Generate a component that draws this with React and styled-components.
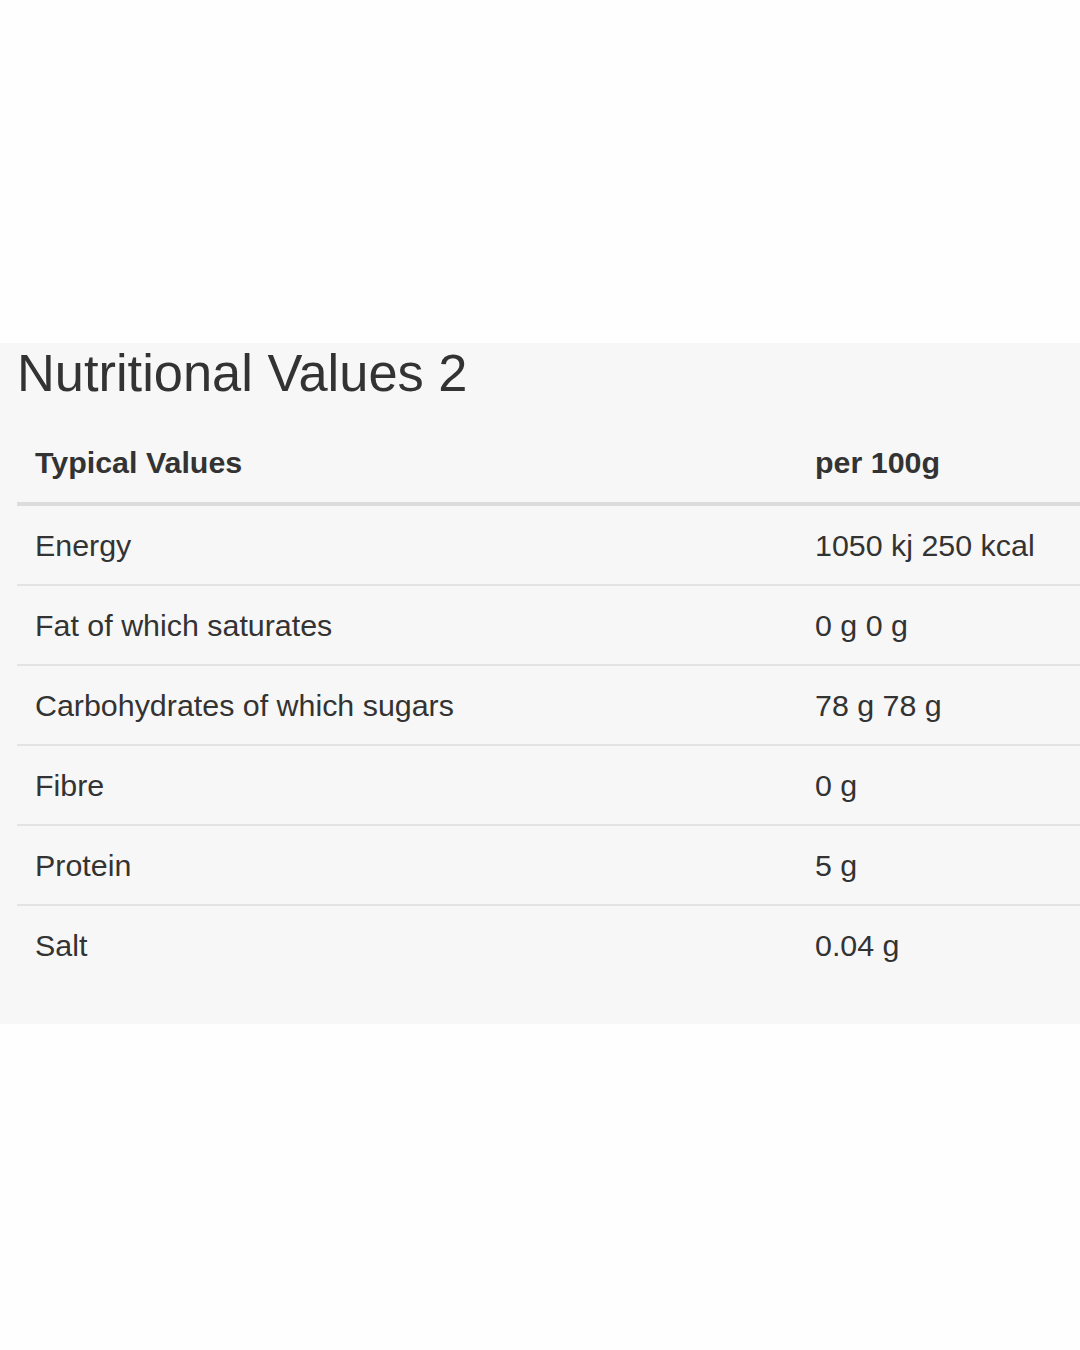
import React from "react";
import styled, { createGlobalStyle } from "styled-components";

const Global = createGlobalStyle`
  html, body { margin: 0; padding: 0; background: #fefefe; }
  body { font-family: "Liberation Sans", Arial, sans-serif; color: #333; }
`;

const Page = styled.div`
  width: 1080px;
  min-height: 1350px;
  padding-top: 343px;
  box-sizing: border-box;
  background: #fefefe;
`;

const Panel = styled.section`
  background: #f7f7f7;
  padding: 0 0 40px 17px;
  overflow: hidden;
`;

const Title = styled.h2`
  margin: 0 0 20px 0;
  font-size: 52.4px;
  font-weight: 400;
  line-height: 60px;
  color: #333;
`;

const Table = styled.table`
  width: 1063px;
  border-collapse: collapse;
  table-layout: fixed;
  font-size: 30.4px;
  color: #333;
`;

const HeadCell = styled.th`
  text-align: left;
  font-weight: 700;
  padding: 18px 18px;
  line-height: 43px;
  border-bottom: 4px solid #dddddd;
  width: ${(p) => p.$w || "auto"};
`;

const Row = styled.tr`
  border-top: ${(p) => (p.$first ? "none" : "2px solid #e3e3e3")};
`;

const Cell = styled.td`
  padding: 17.5px 18px;
  line-height: 43px;
  white-space: nowrap;
`;

const rows = [
  ["Energy", "1050 kj 250 kcal"],
  ["Fat of which saturates", "0 g 0 g"],
  ["Carbohydrates of which sugars", "78 g 78 g"],
  ["Fibre", "0 g"],
  ["Protein", "5 g"],
  ["Salt", "0.04 g"],
];

export default function App() {
  return (
    <Page>
      <Global />
      <Panel>
        <Title>Nutritional Values 2</Title>
        <Table>
          <thead>
            <tr>
              <HeadCell $w="744px">Typical Values</HeadCell>
              <HeadCell>per 100g</HeadCell>
            </tr>
          </thead>
          <tbody>
            {rows.map(([k, v], i) => (
              <Row key={k} $first={i === 0}>
                <Cell>{k}</Cell>
                <Cell>{v}</Cell>
              </Row>
            ))}
          </tbody>
        </Table>
      </Panel>
    </Page>
  );
}
